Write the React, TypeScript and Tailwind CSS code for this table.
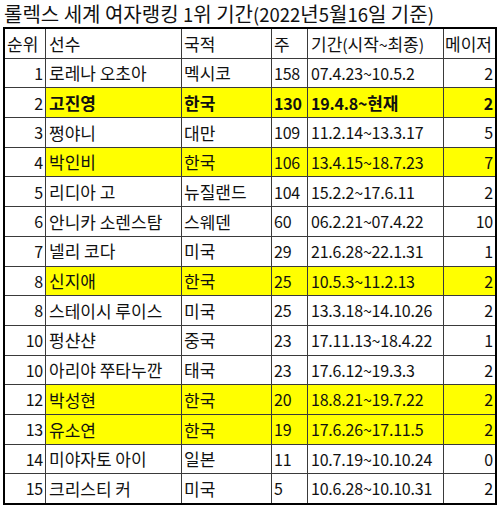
import clsx from "clsx";

type Row = {
	rank: string;
	name: string;
	nation: string;
	weeks: string;
	period: string;
	majors: string;
	korea?: boolean;
	bold?: boolean;
};

const ROWS: Row[] = [
	{ rank: "1", name: "로레나 오초아", nation: "멕시코", weeks: "158", period: "07.4.23~10.5.2", majors: "2" },
	{ rank: "2", name: "고진영", nation: "한국", weeks: "130", period: "19.4.8~현재", majors: "2", korea: true, bold: true },
	{ rank: "3", name: "쩡야니", nation: "대만", weeks: "109", period: "11.2.14~13.3.17", majors: "5" },
	{ rank: "4", name: "박인비", nation: "한국", weeks: "106", period: "13.4.15~18.7.23", majors: "7", korea: true },
	{ rank: "5", name: "리디아 고", nation: "뉴질랜드", weeks: "104", period: "15.2.2~17.6.11", majors: "2" },
	{ rank: "6", name: "안니카 소렌스탐", nation: "스웨덴", weeks: "60", period: "06.2.21~07.4.22", majors: "10" },
	{ rank: "7", name: "넬리 코다", nation: "미국", weeks: "29", period: "21.6.28~22.1.31", majors: "1" },
	{ rank: "8", name: "신지애", nation: "한국", weeks: "25", period: "10.5.3~11.2.13", majors: "2", korea: true },
	{ rank: "8", name: "스테이시 루이스", nation: "미국", weeks: "25", period: "13.3.18~14.10.26", majors: "2" },
	{ rank: "10", name: "펑샨샨", nation: "중국", weeks: "23", period: "17.11.13~18.4.22", majors: "1" },
	{ rank: "10", name: "아리야 쭈타누깐", nation: "태국", weeks: "23", period: "17.6.12~19.3.3", majors: "2" },
	{ rank: "12", name: "박성현", nation: "한국", weeks: "20", period: "18.8.21~19.7.22", majors: "2", korea: true },
	{ rank: "13", name: "유소연", nation: "한국", weeks: "19", period: "17.6.26~17.11.5", majors: "2", korea: true },
	{ rank: "14", name: "미야자토 아이", nation: "일본", weeks: "11", period: "10.7.19~10.10.24", majors: "0" },
	{ rank: "15", name: "크리스티 커", nation: "미국", weeks: "5", period: "10.6.28~10.10.31", majors: "2" },
];

// Hangul in the sheet font runs wider than Noto's, digits narrower — size the runs apart
function Txt({ s, title = false }: { s: string; title?: boolean }) {
	const parts = s.split(/([가-힣 ]+)/).filter(Boolean);
	return (
		<span className={clsx("whitespace-pre", title ? "leading-[1.25]" : "leading-[1.15]")}>
			{parts.map((p, i) =>
				/[가-힣]/.test(p) ? (
					<span key={i} className={title ? "text-[20px]" : "text-[17px]"}>
						{p}
					</span>
				) : (
					<span key={i} className={title ? "text-[18.5px]" : "text-[16px] tracking-[-0.2px]"}>
						{p}
					</span>
				),
			)}
		</span>
	);
}

const cell = "flex items-center whitespace-nowrap overflow-hidden";

export default function App() {
	return (
		<div className="w-[500px] h-[507px] bg-white text-[#111] font-['Noto_Sans_CJK_KR',sans-serif]">
			<div className="h-[27px] flex items-center pl-[4px]">
				<Txt s="롤렉스 세계 여자랭킹 1위 기간(2022년5월16일 기준)" title />
			</div>
			<div className="ml-[3px] w-[494px] border-2 border-black bg-[#3a3a3a] grid grid-cols-[40px_135px_89px_35px_135px_51px] auto-rows-[28.7px] gap-px">
				<div className={clsx(cell, "bg-white pl-[2px]")}>
					<Txt s="순위" />
				</div>
				<div className={clsx(cell, "bg-white pl-[3px]")}>
					<Txt s="선수" />
				</div>
				<div className={clsx(cell, "bg-white pl-[2px]")}>
					<Txt s="국적" />
				</div>
				<div className={clsx(cell, "bg-white pl-[2px]")}>
					<Txt s="주" />
				</div>
				<div className={clsx(cell, "bg-white pl-[3px]")}>
					<Txt s="기간(시작~최종)" />
				</div>
				<div className={clsx(cell, "bg-white pl-[1px]")}>
					<Txt s="메이저" />
				</div>
				{ROWS.map((r, i) => {
					const hl = r.korea ? "bg-[#ffff00]" : "bg-white";
					const b = r.bold ? "font-bold" : "";
					return [
						<div key={`${i}a`} className={clsx(cell, "bg-white justify-end pr-[2px]")}>
							<Txt s={r.rank} />
						</div>,
						<div key={`${i}b`} className={clsx(cell, hl, b, "pl-[3px]")}>
							<Txt s={r.name} />
						</div>,
						<div key={`${i}c`} className={clsx(cell, hl, b, "pl-[2px]")}>
							<Txt s={r.nation} />
						</div>,
						<div key={`${i}d`} className={clsx(cell, hl, b, "pl-[2px]")}>
							<Txt s={r.weeks} />
						</div>,
						<div key={`${i}e`} className={clsx(cell, hl, b, "pl-[3px]")}>
							<Txt s={r.period} />
						</div>,
						<div key={`${i}f`} className={clsx(cell, hl, b, "justify-end pr-[2px]")}>
							<Txt s={r.majors} />
						</div>,
					];
				})}
			</div>
		</div>
	);
}
